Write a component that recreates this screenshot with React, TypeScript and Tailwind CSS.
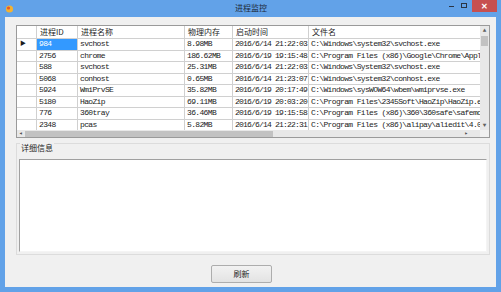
import React from "react";

interface ProcRow {
  id: string;
  name: string;
  mem: string;
  start: string;
  file: string;
}

const rows: ProcRow[] = [
  { id: "984", name: "svchost", mem: "8.98MB", start: "2016/6/14 21:22:03", file: "C:\\Windows\\system32\\svchost.exe" },
  { id: "2756", name: "chrome", mem: "186.62MB", start: "2016/6/19 19:15:48", file: "C:\\Program Files (x86)\\Google\\Chrome\\Application\\chrome.exe" },
  { id: "588", name: "svchost", mem: "25.31MB", start: "2016/6/14 21:22:03", file: "C:\\Windows\\System32\\svchost.exe" },
  { id: "5068", name: "conhost", mem: "0.65MB", start: "2016/6/14 21:23:07", file: "C:\\Windows\\system32\\conhost.exe" },
  { id: "5924", name: "WmiPrvSE", mem: "35.82MB", start: "2016/6/19 20:17:49", file: "C:\\Windows\\sysWOW64\\wbem\\wmiprvse.exe" },
  { id: "5180", name: "HaoZip", mem: "69.11MB", start: "2016/6/19 20:03:20", file: "C:\\Program Files\\2345Soft\\HaoZip\\HaoZip.exe" },
  { id: "776", name: "360tray", mem: "36.46MB", start: "2016/6/19 19:15:58", file: "C:\\Program Files (x86)\\360\\360safe\\safemon\\360tray.exe" },
  { id: "2348", name: "pcas", mem: "5.82MB", start: "2016/6/14 21:22:31", file: "C:\\Program Files (x86)\\alipay\\aliedit\\4.0.0.0\\pcas.exe" },
];

const cols = "grid grid-cols-[20px_41px_107px_48px_76px_171px]";
const cell = "overflow-hidden whitespace-nowrap border-r border-[#d0d0d0] pl-[2px]";
const mono = { fontFamily: '"Liberation Mono", "Noto Sans CJK SC", monospace' };
const ui = { fontFamily: '"Noto Sans CJK SC", "Noto Sans", sans-serif' };

const App = () => {
  return (
    <div className="flex h-[292px] w-[501px] flex-col bg-[#62a2e8]" style={ui}>
      {/* title bar */}
      <div className="relative flex h-[17px] items-center">
        <svg width="9" height="8" viewBox="0 0 9 8" className="ml-[5px]">
          <circle cx="4.5" cy="4" r="3.6" fill="#f2b233" />
          <circle cx="3.5" cy="3" r="1.6" fill="#e4572e" />
        </svg>
        <span className="absolute left-[235px] top-[2px] text-[8px] leading-[12px] text-[#1e2a3a]">进程监控</span>
        <div className="ml-auto flex h-full items-start">
          <span className="mt-[6px] h-[1px] w-[5px] bg-[#2a3545]" />
          <span className="ml-[7px] mt-[3px] h-[5px] w-[6px] border border-[#2a3545]" />
          <div className="ml-[5px] mr-[4px] flex h-[12px] w-[25px] items-center justify-center bg-[#c75050] text-[8px] font-bold leading-none text-white">
            ✕
          </div>
        </div>
      </div>

      {/* client area */}
      <div className="mx-[5px] mb-[5px] flex flex-1 flex-col bg-[#f0f0f0] pl-[11px] pr-[6px] pt-[8px]">
        {/* data grid */}
        <div className="flex h-[113px] flex-col border border-[#9a9a9a] bg-white text-[8px] text-[#1c1c1c]" style={mono}>
          <div className="flex h-[104px]">
            <div className="flex w-[463px] flex-col overflow-hidden">
              <div className={`${cols} h-[13px] items-center border-b border-[#d0d0d0] leading-[12px]`}>
                <div className="h-full border-r border-[#d0d0d0]" />
                <div className="h-full border-r border-[#d0d0d0] pl-[3px]" style={ui}>进程ID</div>
                <div className="h-full border-r border-[#d0d0d0] pl-[3px]" style={ui}>进程名称</div>
                <div className="h-full border-r border-[#d0d0d0] pl-[3px]" style={ui}>物理内存</div>
                <div className="h-full border-r border-[#d0d0d0] pl-[3px]" style={ui}>启动时间</div>
                <div className="h-full pl-[3px]" style={ui}>文件名</div>
              </div>
              {rows.map((r, i) => (
                <div key={r.id} className={`${cols} h-[11.5px] border-b border-[#d0d0d0] leading-[10.5px] tracking-[-0.65px]`}>
                  <div className="flex items-center border-r border-[#d0d0d0] pl-[3px]">
                    {i === 0 && <span className="text-[6px] leading-none">▶</span>}
                  </div>
                  <div className={`${cell} ${i === 0 ? "bg-[#3399ff] text-white" : ""}`}>{r.id}</div>
                  <div className={cell}>{r.name}</div>
                  <div className={cell}>{r.mem}</div>
                  <div className={`${cell} tracking-[-0.8px]`}>{r.start}</div>
                  <div className="overflow-hidden whitespace-nowrap pl-[2px]">{r.file}</div>
                </div>
              ))}
            </div>
            {/* vertical scrollbar */}
            <div className="flex w-[9px] flex-col items-center bg-[#e8e8e8]">
              <span className="mt-[1px] text-[6px] leading-[8px] text-[#606060]">▲</span>
              <div className="mt-[1px] h-[10px] w-[7px] bg-[#c2c2c2]" />
              <span className="mt-auto mb-[1px] text-[6px] leading-[7px] text-[#606060]">▼</span>
            </div>
          </div>
          {/* horizontal scrollbar */}
          <div className="flex h-[8px] items-center bg-[#e8e8e8]">
            <span className="ml-[2px] w-[5px] text-[6px] leading-none text-[#505050]">◂</span>
            <div className="ml-[1px] h-[6px] w-[248px] bg-[#c2c2c2]" />
            <span className="ml-auto mr-[12px] text-[6px] leading-none text-[#505050]">▸</span>
            <div className="h-full w-[9px] bg-[#f0f0f0]" />
          </div>
        </div>

        {/* group box */}
        <div className="relative mt-[5px] h-[112px] border border-[#dcdcdc] px-[2px] pb-[2px] pt-[15px]">
          <span className="absolute left-[3px] top-[-2px] bg-[#f0f0f0] px-px text-[8px] leading-[12px] text-[#1e1e1e]">详细信息</span>
          <div className="h-full border border-t-[#a0a0a0] border-l-[#a0a0a0] border-r-[#f4f4f4] border-b-[#f4f4f4] bg-white" />
        </div>

        {/* button */}
        <div className="mt-[10px] flex justify-center pr-[23px]">
          <button
            type="button"
            className="h-[18px] w-[61px] rounded-[2px] border border-[#adadad] bg-gradient-to-b from-[#f2f2f2] to-[#e3e3e3] text-[8px] leading-none text-[#1e1e1e]"
          >
            刷新
          </button>
        </div>
      </div>
    </div>
  );
};

export default App;
